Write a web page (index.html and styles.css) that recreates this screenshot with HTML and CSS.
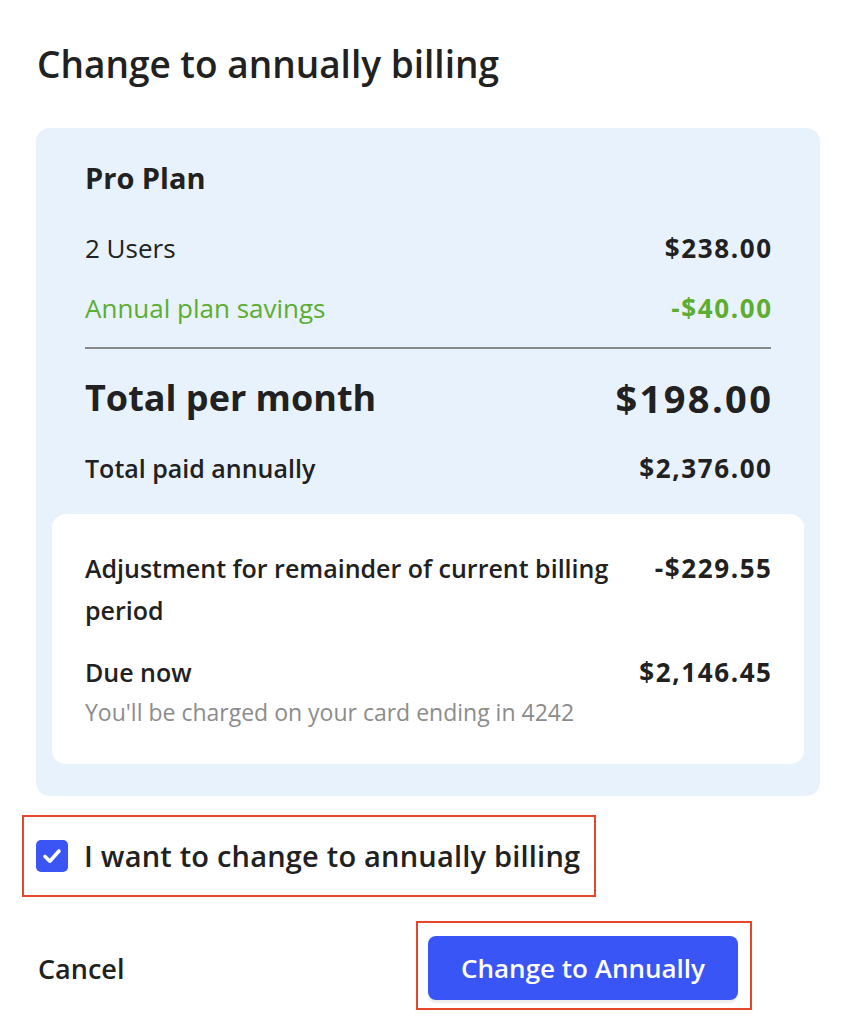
FILE: index.html
```html
<!DOCTYPE html>
<html lang="en">
<head>
<meta charset="utf-8">
<title>Change to annually billing</title>
<link rel="stylesheet" href="styles.css">
</head>
<body>
<main class="dialog">
  <h1 class="title">Change to annually billing</h1>
  <section class="summary">
    <div class="plan-name">Pro Plan</div>
    <div class="row row-users"><span>2 Users</span><span class="amount">$238.00</span></div>
    <div class="row row-savings"><span>Annual plan savings</span><span class="amount">-$40.00</span></div>
    <hr class="divider">
    <div class="row row-total"><span>Total per month</span><span class="amount">$198.00</span></div>
    <div class="row row-annual"><span>Total paid annually</span><span class="amount">$2,376.00</span></div>
    <div class="due-card">
      <div class="row row-adjust"><span class="adjust-label">Adjustment for remainder of current billing period</span><span class="amount">-$229.55</span></div>
      <div class="row row-due"><span>Due now</span><span class="amount">$2,146.45</span></div>
      <div class="charge-note">You'll be charged on your card ending in 4242</div>
    </div>
  </section>
  <div class="highlight confirm">
    <label class="confirm-label">
      <span class="checkbox"><svg viewBox="0 0 32 32" width="32" height="32"><path d="M9 16.5 L13.8 21.2 L23 11" fill="none" stroke="#fff" stroke-width="3.6" stroke-linecap="round" stroke-linejoin="round"/></svg></span>
      <span>I want to change to annually billing</span>
    </label>
  </div>
  <div class="actions">
    <button class="btn-cancel" type="button">Cancel</button>
    <div class="highlight btn-wrap">
      <button class="btn-primary" type="button">Change to Annually</button>
    </div>
  </div>
</main>
</body>
</html>
```

FILE: styles.css
```css
* { box-sizing: border-box; }
html, body { margin: 0; padding: 0; background: #fff; }
body {
  font-family: "Open Sans", "Noto Sans", "Liberation Sans", sans-serif;
  color: #212121;
}
.dialog {
  padding: 42px 22px 0 22px;
}
.title {
  margin: 0 0 42px 15px;
  font-size: 37px;
  line-height: 44px;
  font-weight: 600;
  letter-spacing: 0;
}
.summary {
  margin-left: 14px;
  background: #e8f2fd;
  border-radius: 14px;
  padding: 32px 16px 32px 16px;
}
.plan-name {
  padding: 0 33px;
  font-size: 29px;
  line-height: 36px;
  font-weight: 700;
}
.row {
  display: flex;
  justify-content: space-between;
  align-items: flex-start;
  padding: 0 33px;
  font-size: 26px;
  line-height: 36px;
}
.amount {
  font-size: 26px;
  font-weight: 700;
  letter-spacing: 1.6px;
  margin-right: -1.6px;
  white-space: nowrap;
}
.row-users { margin-top: 34px; }
.row-savings { margin-top: 24px; color: #5cad30; }
.divider {
  margin: 21px 33px 0 33px;
  border: 0;
  height: 2px;
  background: #8a8a8a;
}
.row-total {
  margin-top: 27px;
  font-size: 36px;
  line-height: 44px;
  font-weight: 700;
  align-items: center;
}
.row-total .amount {
  font-size: 38px;
  letter-spacing: 2.4px;
  margin-right: -2.4px;
}
.row-annual {
  margin-top: 30px;
  font-size: 25px;
  font-weight: 600;
}
.due-card {
  margin-top: 28px;
  background: #fff;
  border-radius: 14px;
  padding: 33px 0 38px 0;
}
.row-adjust {
  font-size: 25px;
  font-weight: 600;
  line-height: 42px;
}
.adjust-label { flex: 0 1 545px; }
.row-due {
  margin-top: 23px;
  font-size: 25px;
  font-weight: 600;
}
.charge-note {
  margin-top: 8px;
  padding: 0 33px;
  font-size: 23px;
  line-height: 28px;
  color: #8c8c8c;
}
.highlight {
  border: 2px solid #e6462c;
}
.confirm {
  margin-top: 19px;
  display: inline-flex;
  align-items: center;
  height: 82px;
  padding: 0 14px 0 12px;
}
.confirm-label {
  display: flex;
  align-items: center;
  gap: 16px;
  font-size: 29px;
  font-weight: 600;
  letter-spacing: 0.2px;
  line-height: 40px;
}
.checkbox {
  width: 32px;
  height: 32px;
  border-radius: 5px;
  background: #3b55f5;
  display: block;
}
.checkbox svg { display: block; }
.actions {
  margin-top: 24px;
  display: flex;
  align-items: center;
  justify-content: space-between;
  padding-left: 16px;
  padding-right: 68px;
}
.btn-cancel {
  background: none;
  border: 0;
  padding: 0;
  font-family: inherit;
  font-size: 27px;
  font-weight: 600;
  color: #212121;
  margin-top: 5px;
}
.btn-wrap {
  padding: 13px 12px 8px 10px;
}
.btn-primary {
  display: block;
  width: 310px;
  height: 64px;
  border: 0;
  border-radius: 8px;
  background: #3a55f6;
  color: #fff;
  font-family: inherit;
  font-size: 26px;
  font-weight: 600;
  box-shadow: 0 3px 2px rgba(0,0,0,0.08);
}
```
